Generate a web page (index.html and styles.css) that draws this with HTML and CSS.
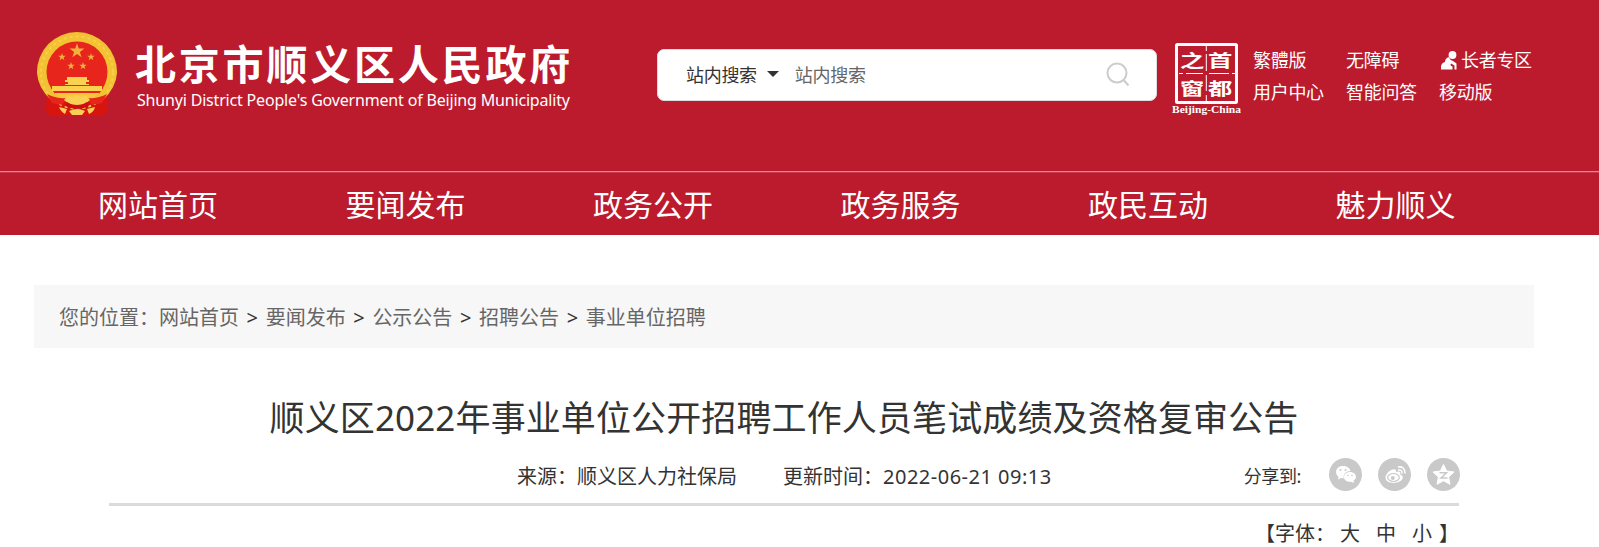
FILE: index.html
```
<!DOCTYPE html>
<html lang="zh-CN">
<head>
    <meta charset="UTF-8">
    <title>顺义区2022年事业单位公开招聘工作人员笔试成绩及资格复审公告</title>
    <link rel="stylesheet" href="styles.css">
</head>
<body>

    <header class="header">
        <div class="top">
            <a class="logo">
                <!-- 国徽 -->
                <svg class="emblem" viewBox="0 0 82 86">
                    <defs>
                        <path id="star" d="M0-10 2.3-3.1 9.5-3.1 3.7 1.2 5.9 8.1 0 3.8-5.9 8.1-3.7 1.2-9.5-3.1-2.3-3.1z"/>
                    </defs>
                    <path d="M11 58Q13 64 18 66L65 66Q70 64 71 58L71 79Q68 86 60 84L22 84Q13 86 10 79z" fill="#d8140f"/>
                    <path d="M41 0A40 40 0 0 1 81 41Q80 56 67 68L15 68Q2 56 1 41A40 40 0 0 1 41 0z" fill="#f2c233"/>
                    <circle cx="41" cy="40.500" r="36" fill="none" stroke="#f7cf4c" stroke-width="2" stroke-dasharray="3 3"/>
                    <circle cx="41" cy="40" r="30.500" fill="#e8251c"/>
                    <path d="M15 56H67L63 62H19z" fill="#e8251c"/>
                    <g fill="#f2b13c">
                        <use href="#star" transform="translate(41 19) scale(.78)"/>
                        <use href="#star" transform="translate(26 25) scale(.4)"/>
                        <use href="#star" transform="translate(55 25) scale(.4)"/>
                        <use href="#star" transform="translate(35 34) scale(.4)"/>
                        <use href="#star" transform="translate(47 34) scale(.4)"/>
                    </g>
                    <path d="M31 45H51V48H53V50H50V52H53V53H29V52H32V50H29V48H31z" fill="#fbd150"/>
                    <path d="M16 54H66V59H16z" fill="#fbd150"/>
                    <path d="M18 61H64L55 68H27z" fill="#f7c63b"/>
                    <path d="M11 62Q20 67 31 66L26 73 16 71zM71 62Q62 67 51 66L56 73 66 71z" fill="#e8251c"/>
                    <path d="M32 63L36 65 41 63 46 65 50 63 54 68 49 72 41 73 33 72 28 68z" fill="#f9cf55"/>
                    <path d="M31 70Q41 77 51 70L53 74Q41 80 29 74z" fill="#c90f12"/>
                    <path d="M23 75L31 77 29 82Q25 80 23 75zM59 75L51 77 53 82Q58 80 59 75zM33 79Q41 75 49 79L46 83H36z" fill="#f9cf55"/>
                </svg>
                <span class="logo-text">
                    <strong>北京市顺义区人民政府</strong>
                    <em>Shunyi District People's Government of Beijing Municipality</em>
                </span>
            </a>

            <div class="search">
                <span class="search-type">站内搜索</span>
                <i class="caret"></i>
                <span class="search-input">站内搜索</span>
                <svg class="search-icon" viewBox="0 0 24 25">
                    <circle cx="11" cy="11" r="9.500"/>
                    <path d="M17.500 18 22.500 23.500"/>
                </svg>
            </div>

            <!-- 首都之窗 -->
            <svg class="seal" viewBox="0 0 70 72">
                <rect x="5.500" y="1.500" width="60" height="58" rx="1"/>
                <path d="M35.300 3V8M35.300 11V28M35.300 32V48M35.300 52V58M8 30.500H12M15 30.500H32M38 30.500H58M61 30.500H64"/>
                <g class="seal-chars">
                    <text transform="translate(9 23.500) scale(1.350 .95)">之</text>
                    <text transform="translate(37 23.500) scale(1.350 .95)">首</text>
                    <text transform="translate(9 51.500) scale(1.350 .95)">窗</text>
                    <text transform="translate(37 51.500) scale(1.350 .95)">都</text>
                </g>
                <text class="seal-en" x="1" y="70" textLength="69" lengthAdjust="spacingAndGlyphs">Beijing-China</text>
            </svg>

            <ul class="links">
                <li>繁體版</li>
                <li>无障碍</li>
                <li class="elder">
                    <svg viewBox="0 0 16 19">
                        <circle cx="11.500" cy="4" r="3.900"/>
                        <path d="M7.500 6Q9 9 12 10L15.500 12.500V18.500H13.500V14.500L10 12.500Q8.500 14.500 11.500 15.500V18.500H0V15Q1 11.500 4 11Q4 7.500 7.500 6z"/>
                    </svg>长者专区
                </li>
                <li>用户中心</li>
                <li>智能问答</li>
                <li>移动版</li>
            </ul>
        </div>

        <nav class="nav">
            <a>网站首页</a>
            <a>要闻发布</a>
            <a>政务公开</a>
            <a>政务服务</a>
            <a>政民互动</a>
            <a>魅力顺义</a>
        </nav>
    </header>

    <div class="position">
        您的位置：<a>网站首页</a><b>&gt;</b><a>要闻发布</a><b>&gt;</b><a>公示公告</a><b>&gt;</b><a>招聘公告</a><b>&gt;</b><a>事业单位招聘</a>
    </div>

    <div class="article">
        <h1>顺义区2022年事业单位公开招聘工作人员笔试成绩及资格复审公告</h1>

        <div class="info">
            <span class="source">来源：顺义区人力社保局</span>
            <span class="time">更新时间：<span class="date">2022-06-21 09:13</span></span>
            <span class="share-label">分享到:</span>
            <div class="share">
                <!-- 微信 -->
                <svg viewBox="0 0 33 33">
                    <circle cx="16.500" cy="16.500" r="16.500" fill="#c9c9c9"/>
                    <path d="M14 8C9.800 8 7 10.700 7 14.200Q7 17 9.500 18.800L9 21.500 12 20 14.800 20.300C14 16 17.500 13 21.500 13C21 10 17.800 8 14 8z" fill="#fff"/>
                    <path d="M21 14C17.500 14 15 16.300 15 19C15 22 18 24.200 22 23.700L24.800 25 24.500 22.800Q27 21.200 27 19C27 16.200 24.500 14 21 14z" fill="#fff"/>
                    <g fill="#c9c9c9">
                        <circle cx="11.500" cy="12" r="1"/>
                        <circle cx="16.500" cy="12" r="1"/>
                        <circle cx="19" cy="17.500" r=".8"/>
                        <circle cx="23" cy="17.500" r=".8"/>
                    </g>
                </svg>
                <!-- 微博 -->
                <svg viewBox="0 0 33 33">
                    <circle cx="16.500" cy="16.500" r="16.500" fill="#c9c9c9"/>
                    <path d="M15 11.500C17 11 18.500 12 18 14Q22 12.500 22.500 15L22 16.500Q25 17.500 24.800 19.800C24.300 23 20 25 15.500 25C11 25 7.500 23 7.500 19.800C7.500 16 11.500 12 15 11.500z" fill="#fff"/>
                    <ellipse cx="15.500" cy="19.500" rx="5.800" ry="4" fill="none" stroke="#c9c9c9" stroke-width="1.200"/>
                    <circle cx="14.800" cy="20" r="2" fill="#c9c9c9"/>
                    <path d="M20.500 9Q26.500 8 27 15M20.500 12Q24 11.500 24 15" fill="none" stroke="#fff" stroke-width="1.500" stroke-linecap="round"/>
                </svg>
                <!-- QQ空间 -->
                <svg viewBox="0 0 33 33">
                    <circle cx="16.500" cy="16.500" r="16.500" fill="#c9c9c9"/>
                    <path d="M16.500 6.500 19.600 13 27 14 21.600 19 23 26.300 16.500 22.800 10 26.300 11.400 19 6 14 13.400 13z" fill="#fff" stroke="#fff" stroke-linejoin="round"/>
                    <path d="M12.500 14.800H19.500L14 20H20.500" fill="none" stroke="#c9c9c9" stroke-width="1.500"/>
                </svg>
            </div>
        </div>

        <div class="font-size">
            <span>【字体：</span><a class="big">大</a><a>中</a><a>小</a><span class="end">】</span>
        </div>
    </div>

</body>
</html>
```
FILE: styles.css
```
* {
    box-sizing: border-box;
}
body {
    margin: 0;
    background-color: #fff;
    color: #333;
    font-family: "Noto Sans", "Noto Sans CJK SC", sans-serif;
    font-size: 20px;
    overflow: hidden;
}
.header {
    height: 235px;
    background-color: #bc1b2d;
    color: #fff;
}
.top {
    display: flex;
    align-items: flex-start;
    height: 171px;
    padding-left: 36px;
}
.logo {
    display: flex;
    width: 621px;
    padding-top: 32px;
}
.emblem {
    width: 82px;
    height: 86px;
}
.logo-text {
    display: flex;
    flex-direction: column;
    padding: 8px 0 0 17px;
    white-space: nowrap;
}
.logo-text strong {
    font-size: 41px;
    line-height: 49px;
    letter-spacing: 2.8px;
}
.logo-text em {
    margin-left: 2px;
    font-size: 16px;
    font-style: normal;
    line-height: 23px;
    letter-spacing: -0.18px;
}
.search {
    display: flex;
    align-items: center;
    width: 500px;
    height: 52px;
    margin-top: 49px;
    padding: 0 26px 2px 28px;
    border: 1px solid #ddd;
    border-radius: 7px;
    background-color: #fff;
    color: #333;
    font-size: 18px;
    letter-spacing: -0.3px;
}
.caret {
    margin: 0 16px 0 10px;
    border: 6px solid transparent;
    border-top-color: #333;
    border-bottom: 0;
}
.search-input {
    color: #666;
}
.search-icon {
    width: 24px;
    height: 25px;
    margin-left: auto;
    fill: none;
    stroke: #ccc;
    stroke-width: 2;
}
.seal {
    width: 70px;
    height: 72px;
    margin: 43px 0 0 14px;
    fill: none;
    stroke: #fff;
}
.seal rect {
    stroke-width: 3;
}
.seal text {
    fill: #fff;
    stroke: none;
}
.seal-chars {
    font-size: 18px;
    font-weight: bold;
}
.seal-en {
    font-family: "Liberation Serif", serif;
    font-size: 10px;
    font-weight: bold;
}
.links {
    display: grid;
    grid-template-columns: 93px 93px 100px;
    grid-auto-rows: 32px;
    margin: 44px 0 0 12px;
    padding: 0;
    list-style: none;
    font-size: 18px;
    line-height: 32px;
    letter-spacing: -0.3px;
    white-space: nowrap;
}
.elder {
    display: flex;
    align-items: center;
}
.elder svg {
    width: 16px;
    height: 19px;
    margin: 0 4px 0 2px;
    fill: #fff;
}
.nav {
    display: grid;
    grid-template-columns: repeat(6, 247.5px);
    height: 64px;
    padding-left: 98px;
    border-top: 1px solid #dc8a93;
    box-shadow: inset 0 1px #c53a4a;
    font-size: 30px;
    line-height: 66px;
}
.position {
    width: 1500px;
    height: 63px;
    margin: 50px 0 0 34px;
    padding-left: 25px;
    background-color: #f7f7f7;
    color: #666;
    line-height: 65px;
}
.position b {
    display: inline-block;
    width: 26.7px;
    color: #333;
    font-weight: normal;
    text-align: center;
}
.article {
    width: 1350px;
    margin-left: 109px;
}
.article h1 {
    margin: 41px 0 0;
    font-size: 35px;
    font-weight: normal;
    line-height: 58px;
    letter-spacing: 0.12px;
    text-align: center;
    white-space: nowrap;
}
.info {
    display: flex;
    align-items: center;
    height: 59px;
    padding-left: 408px;
    border-bottom: 3px solid #dbdbdb;
    white-space: nowrap;
}
.time {
    margin-left: 46px;
}
.date {
    letter-spacing: 0.5px;
}
.share-label {
    margin-left: auto;
    font-size: 18px;
    letter-spacing: -0.4px;
}
.share {
    display: flex;
    gap: 16px;
    margin: -2px 0 0 28px;
}
.share svg {
    width: 33px;
    height: 33px;
}
.share svg:last-child {
    margin-right: -1px;
}
.font-size {
    display: flex;
    justify-content: flex-end;
    line-height: 55px;
}
.font-size a {
    margin-right: 16px;
}
.font-size .big {
    margin-left: 5px;
}
.font-size .end {
    margin-left: -9px;
}
```
